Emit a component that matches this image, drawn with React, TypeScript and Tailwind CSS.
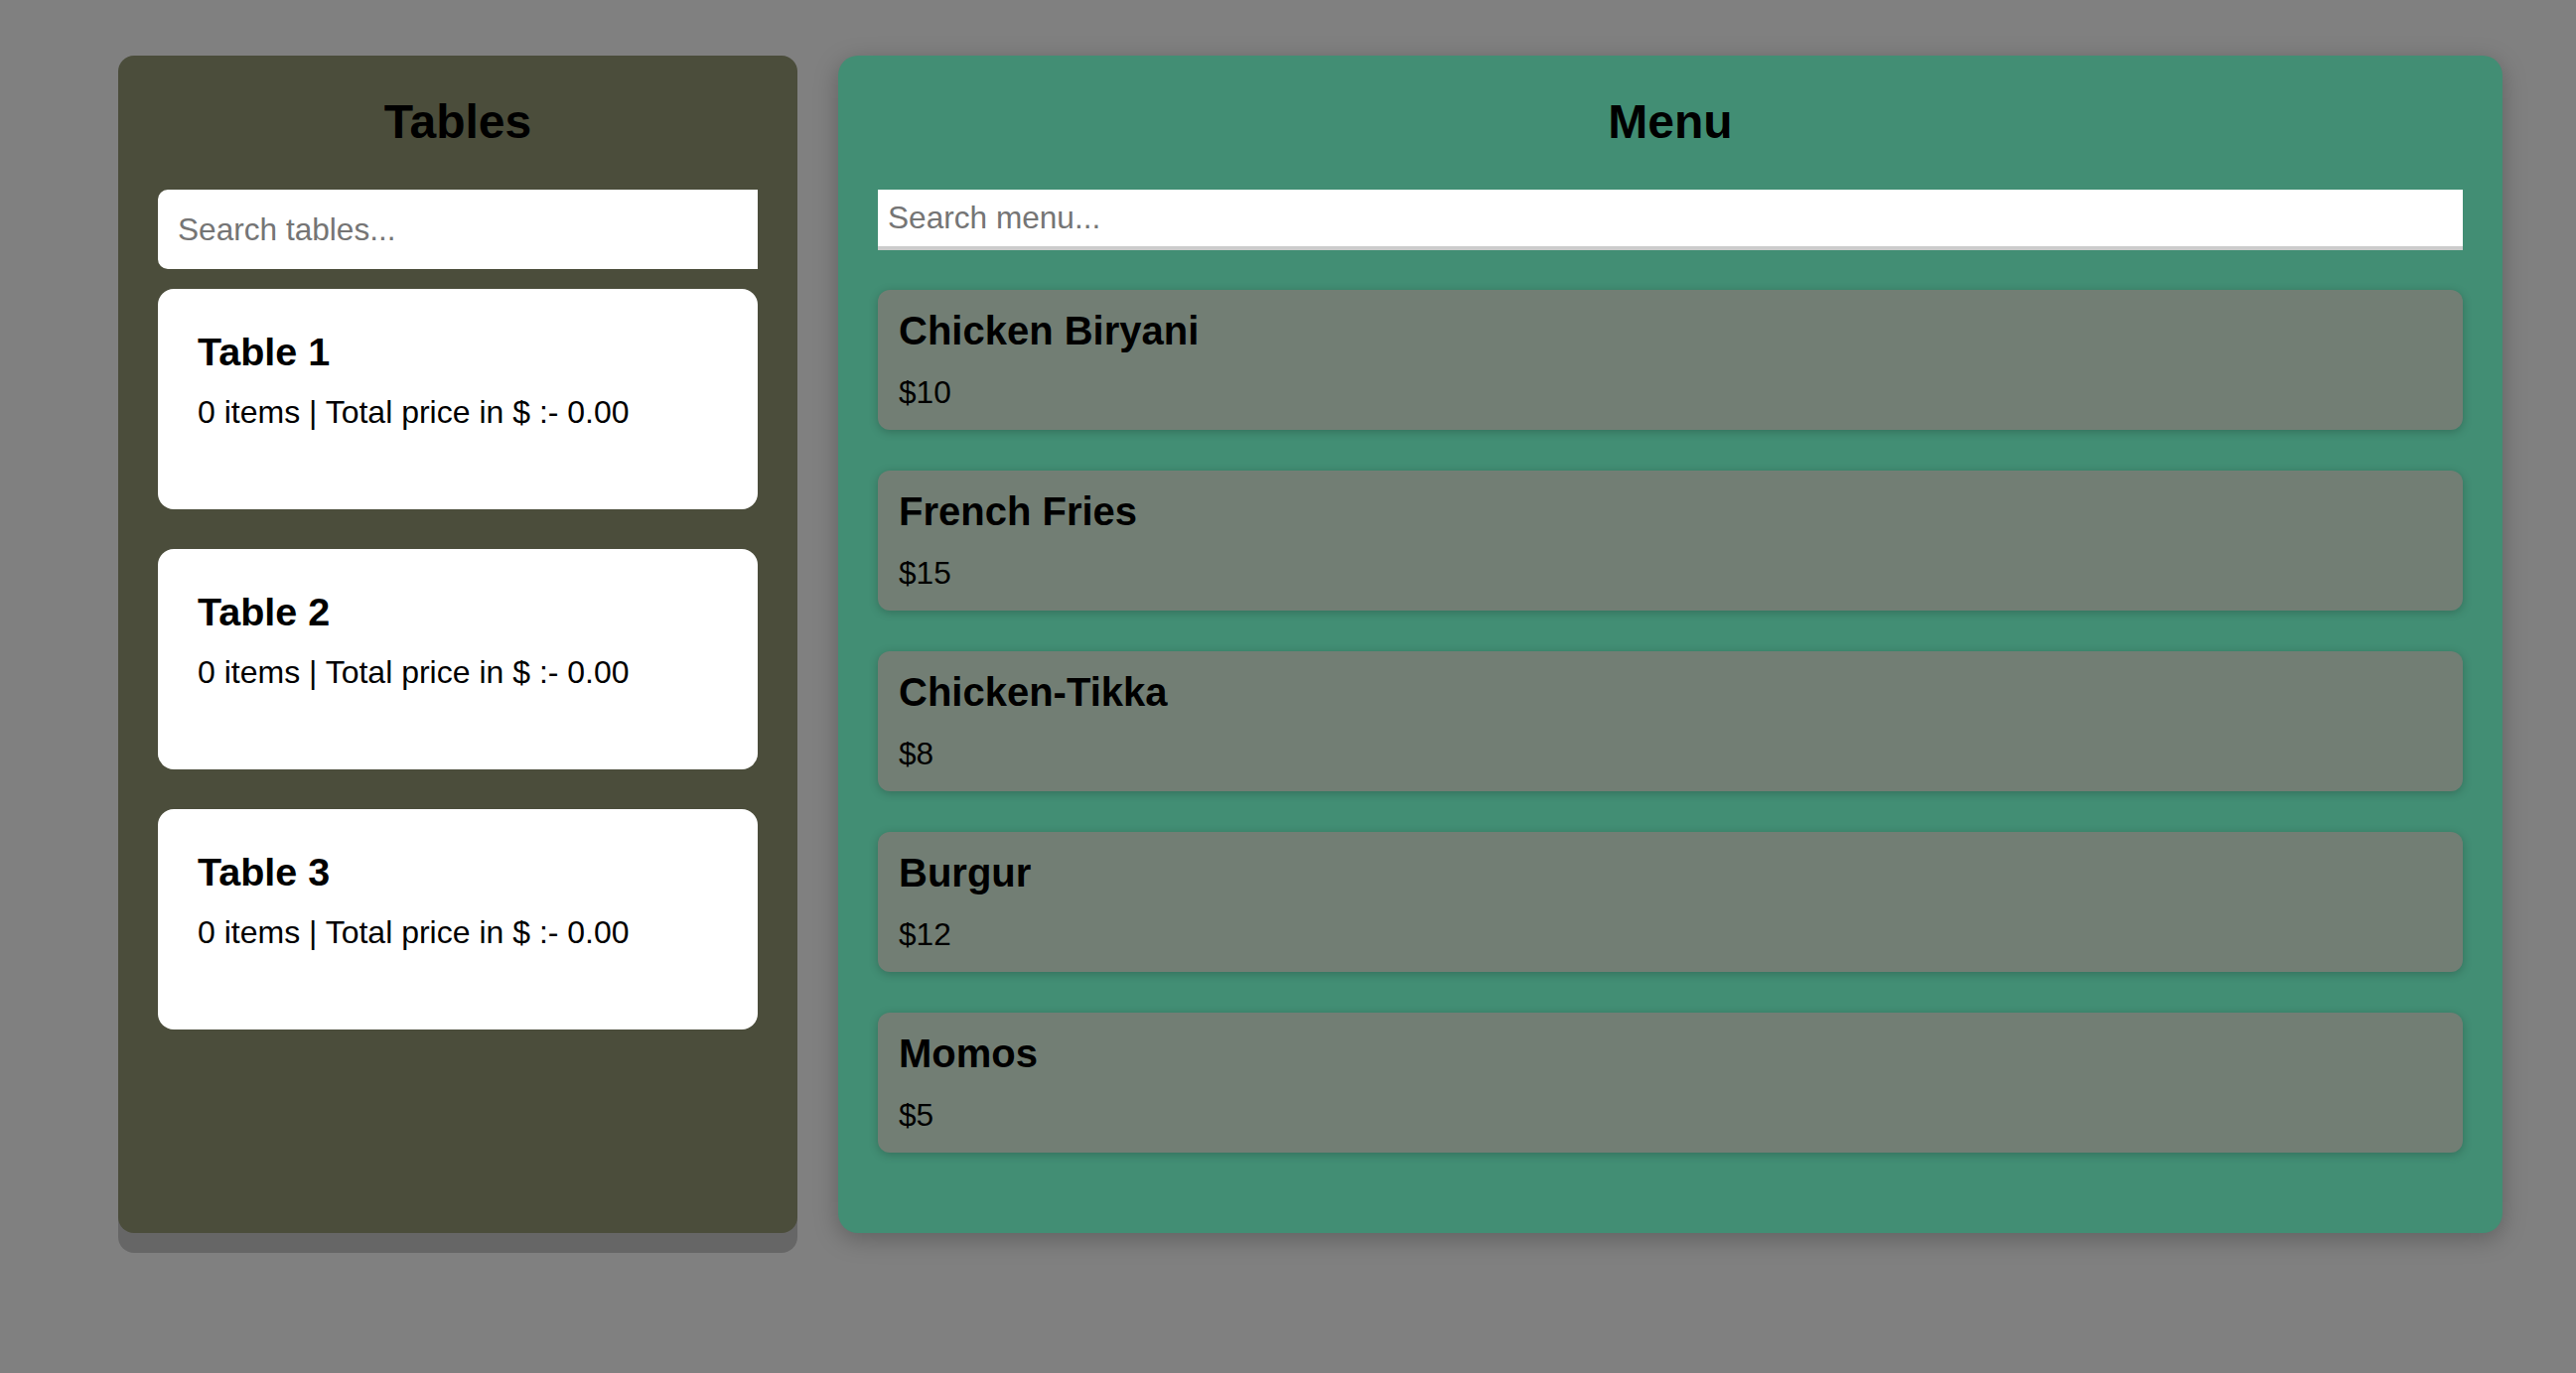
const tables = [
  { id: 1, name: "Table 1", items: 0, total: 0 },
  { id: 2, name: "Table 2", items: 0, total: 0 },
  { id: 3, name: "Table 3", items: 0, total: 0 },
];

const menu = [
  { id: 1, name: "Chicken Biryani", price: 10 },
  { id: 2, name: "French Fries", price: 15 },
  { id: 3, name: "Chicken-Tikka", price: 8 },
  { id: 4, name: "Burgur", price: 12 },
  { id: 5, name: "Momos", price: 5 },
];

function TableCard({ name, items, total }: { name: string; items: number; total: number }) {
  return (
    <div className="h-[222px] rounded-[16px] bg-white px-[40px] pt-[41px]">
      <h3 className="text-[39.5px] font-bold leading-[45px]">{name}</h3>
      <p className="mt-[20px] text-[32px] leading-[36px]">
        {items} items | Total price in $ :- {total.toFixed(2)}
      </p>
    </div>
  );
}

function MenuItem({ name, price }: { name: string; price: number }) {
  return (
    <div className="rounded-[12px] bg-[#727e74] px-[21px] pt-[19px] pb-[20px] shadow-[0_2px_10px_rgba(0,0,0,0.22)]">
      <h3 className="text-[40px] font-bold leading-[45px]">{name}</h3>
      <p className="mt-[21px] text-[31.6px] leading-[36px]">${price}</p>
    </div>
  );
}

export default function App() {
  return (
    <div className="min-h-screen bg-[#808080] pl-[119px] pt-[56px] font-['Liberation_Sans',Arial,sans-serif] text-black">
      <div className="flex items-stretch gap-[41px]">
        {/* tables */}
        <div className="w-[684px] rounded-[16px] bg-[#4b4d3b] px-[40px] pt-[40px] shadow-[0_20px_0_rgba(0,0,0,0.2)]">
          <h2 className="text-center text-[48px] font-bold leading-[54px]">Tables</h2>
          <input
            type="text"
            placeholder="Search tables..."
            className="mt-[41px] block h-[80px] w-full rounded-l-[10px] bg-white px-[20px] text-[31.6px] outline-none placeholder:text-[#757575]"
          />
          <div className="mt-[20px] flex flex-col gap-[40px]">
            {tables.map((t) => (
              <TableCard key={t.id} name={t.name} items={t.items} total={t.total} />
            ))}
          </div>
        </div>

        {/* menu */}
        <div className="w-[1676px] rounded-[20px] bg-[#428e74] px-[40px] pt-[40px] pb-[81px] shadow-[0_6px_24px_rgba(0,0,0,0.25)]">
          <h2 className="text-center text-[48px] font-bold leading-[54px]">Menu</h2>
          <input
            type="text"
            placeholder="Search menu..."
            className="mt-[41px] block h-[61px] w-full border-b-4 border-[#cccccc] bg-white px-[10px] text-[31.6px] outline-none placeholder:text-[#757575]"
          />
          <div className="mt-[40px] flex flex-col gap-[41px]">
            {menu.map((m) => (
              <MenuItem key={m.id} name={m.name} price={m.price} />
            ))}
          </div>
        </div>
      </div>
    </div>
  );
}
